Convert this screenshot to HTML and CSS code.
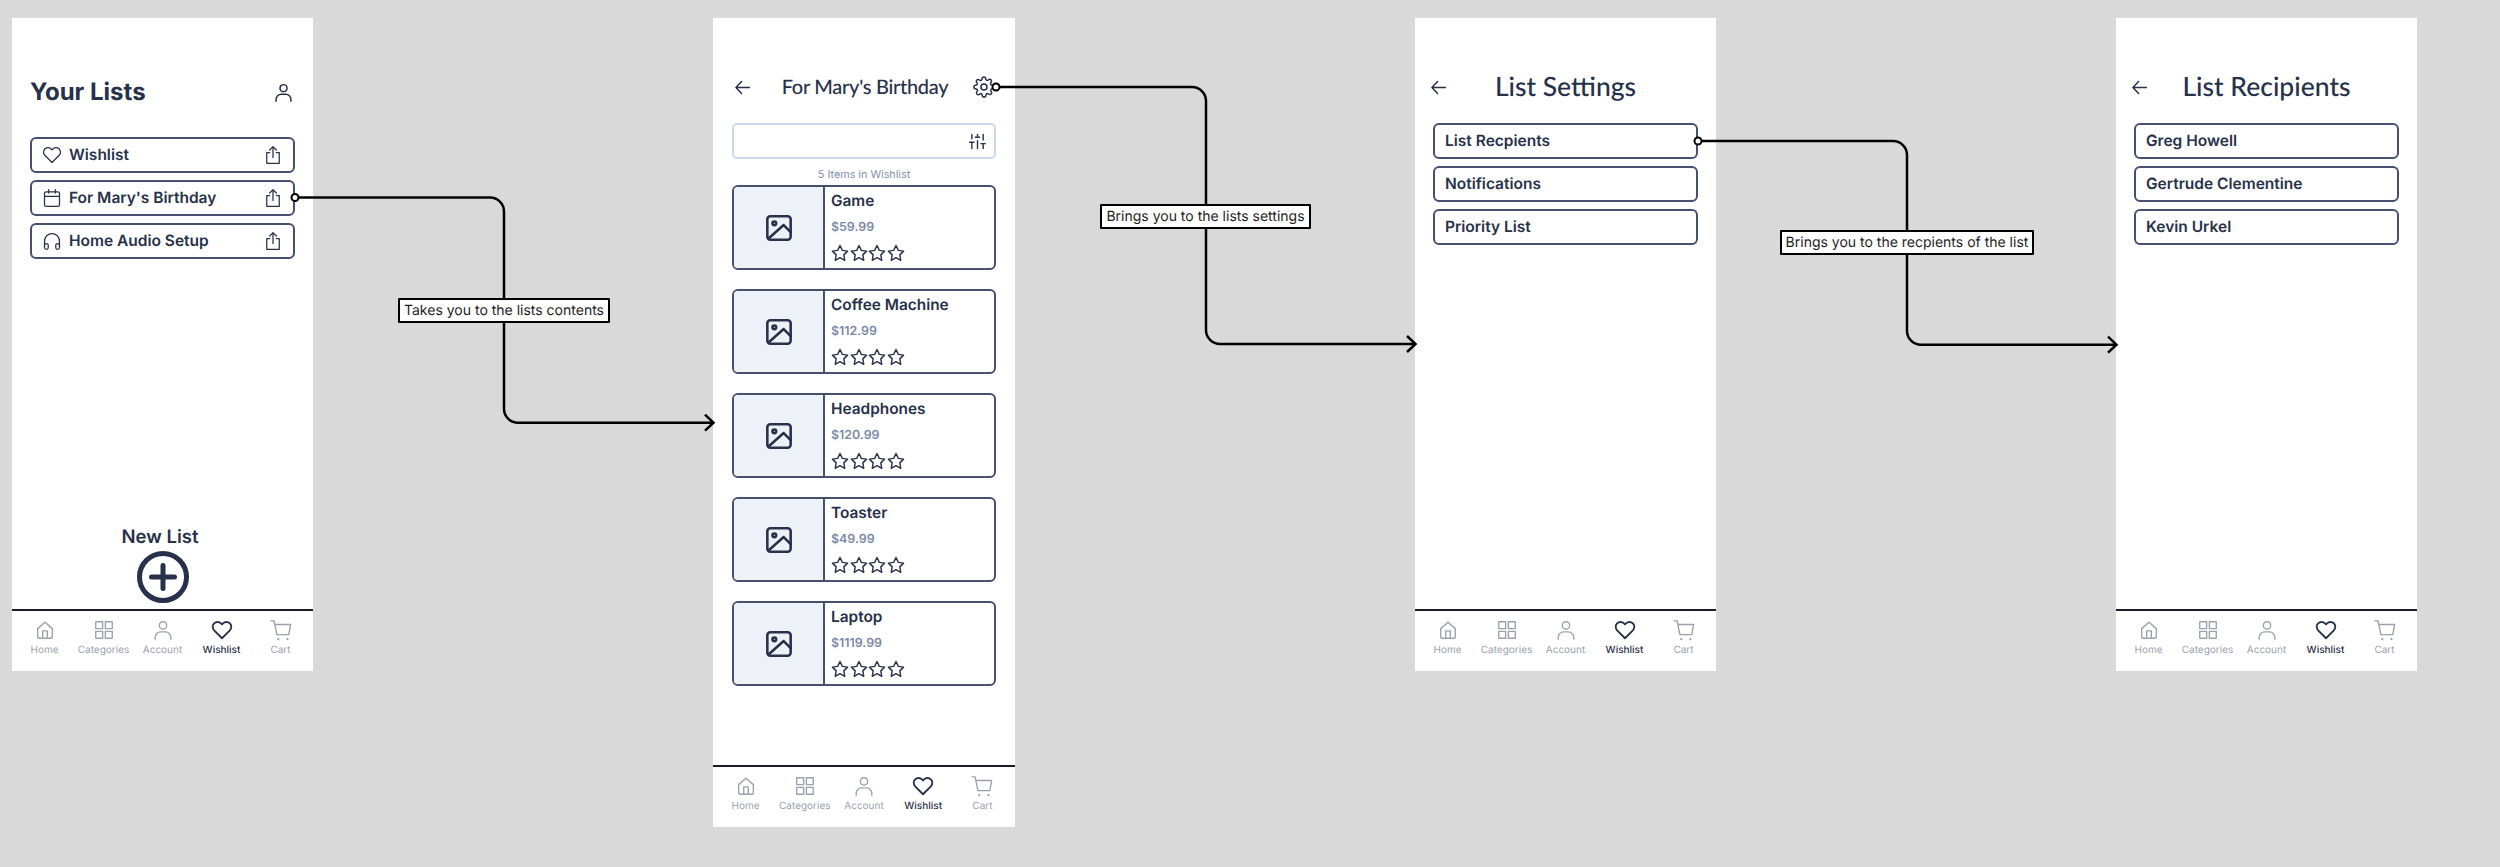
FILE: index.html
```html
<!DOCTYPE html>
<html lang="en">
<head>
<meta charset="utf-8">
<title>Wishlist flow</title>
<link rel="stylesheet" href="styles.css">
</head>
<body>
<svg class="sprite" aria-hidden="true">
  <symbol id="i-home" viewBox="0 0 24 24"><path d="M4 10.5 12 3.5l8 7V19a2 2 0 0 1-2 2H6a2 2 0 0 1-2-2z"/><path d="M9.5 21v-8h5v8"/></symbol>
  <symbol id="i-grid" viewBox="0 0 24 24"><rect x="3" y="3" width="7.5" height="7.5"/><rect x="13.5" y="3" width="7.5" height="7.5"/><rect x="3" y="13.5" width="7.5" height="7.5"/><rect x="13.5" y="13.5" width="7.5" height="7.5"/></symbol>
  <symbol id="i-user" viewBox="0 0 24 24"><circle cx="12" cy="7" r="4"/><path d="M3.5 22v-2a6 6 0 0 1 6-6h5a6 6 0 0 1 6 6v2"/></symbol>
  <symbol id="i-heart" viewBox="0 0 24 24"><path d="M12 21 3.4 12.3a5.3 5.3 0 0 1 0-7.5 5.3 5.3 0 0 1 7.5 0L12 5.9l1.1-1.1a5.3 5.3 0 0 1 7.5 0 5.3 5.3 0 0 1 0 7.5z"/></symbol>
  <symbol id="i-cart" viewBox="0 0 24 24"><path d="M1 2h3.5l3 15h13l2-11H5.5"/><path class="dot" d="M9 22h.01M19 22h.01"/></symbol>
  <symbol id="i-share" viewBox="0 0 24 24"><path d="M8 9H4.500v13h15V9H16"/><path d="M12 15V2M8 6l4-4 4 4"/></symbol>
  <symbol id="i-calendar" viewBox="0 0 24 24"><rect x="3" y="4.5" width="18" height="17.5" rx="2"/><path d="M3 10h18M8 2v4M16 2v4"/></symbol>
  <symbol id="i-headphones" viewBox="0 0 24 24"><path d="M3 18v-6a9 9 0 0 1 18 0v6"/><rect x="3" y="15" width="4.5" height="7" rx="2.2"/><rect x="16.5" y="15" width="4.5" height="7" rx="2.2"/></symbol>
  <symbol id="i-back" viewBox="0 0 24 24"><path d="M23 12H1.5M10.5 2.5 1.5 12l9 9.500"/></symbol>
  <symbol id="i-gear" viewBox="0 0 24 24"><circle cx="12" cy="12" r="3.300"/><path d="M19.400 15a1.650 1.650 0 0 0 .330 1.820l.060.060a2 2 0 1 1-2.830 2.830l-.060-.060a1.650 1.650 0 0 0-2.800 1.170V21a2 2 0 1 1-4 0v-.090a1.650 1.650 0 0 0-2.820-1.170l-.060.060a2 2 0 1 1-2.830-2.830l.060-.060a1.650 1.650 0 0 0-1.170-2.800H3a2 2 0 1 1 0-4h.090a1.650 1.650 0 0 0 1.170-2.820l-.060-.060a2 2 0 1 1 2.830-2.830l.060.060a1.650 1.650 0 0 0 2.800-1.170V3a2 2 0 1 1 4 0v.090a1.650 1.650 0 0 0 2.820 1.170l.060-.060a2 2 0 1 1 2.830 2.830l-.060.060a1.650 1.650 0 0 0 1.170 2.800H21a2 2 0 1 1 0 4h-.090a1.650 1.650 0 0 0-1.510 1.110z"/></symbol>
  <symbol id="i-sliders" viewBox="0 0 24 24"><path d="M4 22v-9M4 8V2M12 22V11M12 6V2M20 22v-7M20 10V2M1 13h6M9 6h6M17 15h6"/></symbol>
  <symbol id="i-image" viewBox="0 0 24 24"><rect x="2" y="2" width="20" height="20" rx="2.500"/><circle cx="8" cy="8" r="1.600"/><path d="M3 21 16 9.500l6 6"/></symbol>
  <symbol id="i-star" viewBox="0 0 24 24"><path d="m12 2 3.100 6.500 7 1-5 5 1.200 7.200L12 18.300l-6.300 3.400 1.200-7.200-5-5 7-1z"/></symbol>
  <symbol id="i-plus" viewBox="0 0 52 52"><circle cx="26" cy="26" r="23.500"/><path d="M14.500 26h23M26 14.500v23"/></symbol>
</svg>

<main class="canvas">

  <section class="frame frame-a">
    <header class="top-lists">
      <h1 class="lists-title">Your Lists</h1>
      <svg class="icon icon-person"><use href="#i-user"/></svg>
    </header>
    <ul class="rows rows-lists">
      <li class="row row-icons"><svg class="icon icon-row"><use href="#i-heart"/></svg><span class="row-text">Wishlist</span><svg class="icon icon-share"><use href="#i-share"/></svg></li>
      <li class="row row-icons"><svg class="icon icon-row"><use href="#i-calendar"/></svg><span class="row-text">For Mary's Birthday</span><svg class="icon icon-share"><use href="#i-share"/></svg></li>
      <li class="row row-icons"><svg class="icon icon-row"><use href="#i-headphones"/></svg><span class="row-text">Home Audio Setup</span><svg class="icon icon-share"><use href="#i-share"/></svg></li>
    </ul>
    <div class="new-list">
      <span class="new-list-text">New List</span>
      <svg class="icon icon-plus"><use href="#i-plus"/></svg>
    </div>
    <nav class="nav">
      <div class="nav-item"><svg class="icon nav-icon"><use href="#i-home"/></svg><span>Home</span></div>
      <div class="nav-item"><svg class="icon nav-icon"><use href="#i-grid"/></svg><span>Categories</span></div>
      <div class="nav-item"><svg class="icon nav-icon"><use href="#i-user"/></svg><span>Account</span></div>
      <div class="nav-item nav-active"><svg class="icon nav-icon"><use href="#i-heart"/></svg><span>Wishlist</span></div>
      <div class="nav-item"><svg class="icon nav-icon"><use href="#i-cart"/></svg><span>Cart</span></div>
    </nav>
  </section>

  <section class="frame frame-b">
    <header class="top top-tall">
      <svg class="icon icon-back"><use href="#i-back"/></svg>
      <h1 class="page-title page-title-b">For Mary's Birthday</h1>
      <svg class="icon icon-gear"><use href="#i-gear"/></svg>
    </header>
    <div class="body-b">
      <div class="search"><svg class="icon icon-sliders"><use href="#i-sliders"/></svg></div>
      <p class="count">5 Items in Wishlist</p>
      <ul class="cards">
        <li class="card"><div class="thumb"><svg class="icon icon-image"><use href="#i-image"/></svg></div><div class="info"><span class="name">Game</span><span class="price">$59.99</span><div class="stars"><svg class="icon star"><use href="#i-star"/></svg><svg class="icon star"><use href="#i-star"/></svg><svg class="icon star"><use href="#i-star"/></svg><svg class="icon star"><use href="#i-star"/></svg></div></div></li>
        <li class="card"><div class="thumb"><svg class="icon icon-image"><use href="#i-image"/></svg></div><div class="info"><span class="name">Coffee Machine</span><span class="price">$112.99</span><div class="stars"><svg class="icon star"><use href="#i-star"/></svg><svg class="icon star"><use href="#i-star"/></svg><svg class="icon star"><use href="#i-star"/></svg><svg class="icon star"><use href="#i-star"/></svg></div></div></li>
        <li class="card"><div class="thumb"><svg class="icon icon-image"><use href="#i-image"/></svg></div><div class="info"><span class="name">Headphones</span><span class="price">$120.99</span><div class="stars"><svg class="icon star"><use href="#i-star"/></svg><svg class="icon star"><use href="#i-star"/></svg><svg class="icon star"><use href="#i-star"/></svg><svg class="icon star"><use href="#i-star"/></svg></div></div></li>
        <li class="card"><div class="thumb"><svg class="icon icon-image"><use href="#i-image"/></svg></div><div class="info"><span class="name">Toaster</span><span class="price">$49.99</span><div class="stars"><svg class="icon star"><use href="#i-star"/></svg><svg class="icon star"><use href="#i-star"/></svg><svg class="icon star"><use href="#i-star"/></svg><svg class="icon star"><use href="#i-star"/></svg></div></div></li>
        <li class="card"><div class="thumb"><svg class="icon icon-image"><use href="#i-image"/></svg></div><div class="info"><span class="name">Laptop</span><span class="price">$1119.99</span><div class="stars"><svg class="icon star"><use href="#i-star"/></svg><svg class="icon star"><use href="#i-star"/></svg><svg class="icon star"><use href="#i-star"/></svg><svg class="icon star"><use href="#i-star"/></svg></div></div></li>
      </ul>
    </div>
    <nav class="nav">
      <div class="nav-item"><svg class="icon nav-icon"><use href="#i-home"/></svg><span>Home</span></div>
      <div class="nav-item"><svg class="icon nav-icon"><use href="#i-grid"/></svg><span>Categories</span></div>
      <div class="nav-item"><svg class="icon nav-icon"><use href="#i-user"/></svg><span>Account</span></div>
      <div class="nav-item nav-active"><svg class="icon nav-icon"><use href="#i-heart"/></svg><span>Wishlist</span></div>
      <div class="nav-item"><svg class="icon nav-icon"><use href="#i-cart"/></svg><span>Cart</span></div>
    </nav>
  </section>

  <section class="frame frame-c">
    <header class="top">
      <svg class="icon icon-back"><use href="#i-back"/></svg>
      <h1 class="page-title">List Settings</h1>
    </header>
    <ul class="rows rows-plain">
      <li class="row"><span class="row-text">List Recpients</span></li>
      <li class="row"><span class="row-text">Notifications</span></li>
      <li class="row"><span class="row-text">Priority List</span></li>
    </ul>
    <nav class="nav">
      <div class="nav-item"><svg class="icon nav-icon"><use href="#i-home"/></svg><span>Home</span></div>
      <div class="nav-item"><svg class="icon nav-icon"><use href="#i-grid"/></svg><span>Categories</span></div>
      <div class="nav-item"><svg class="icon nav-icon"><use href="#i-user"/></svg><span>Account</span></div>
      <div class="nav-item nav-active"><svg class="icon nav-icon"><use href="#i-heart"/></svg><span>Wishlist</span></div>
      <div class="nav-item"><svg class="icon nav-icon"><use href="#i-cart"/></svg><span>Cart</span></div>
    </nav>
  </section>

  <section class="frame frame-d">
    <header class="top">
      <svg class="icon icon-back"><use href="#i-back"/></svg>
      <h1 class="page-title">List Recipients</h1>
    </header>
    <ul class="rows rows-plain">
      <li class="row"><span class="row-text">Greg Howell</span></li>
      <li class="row"><span class="row-text">Gertrude Clementine</span></li>
      <li class="row"><span class="row-text">Kevin Urkel</span></li>
    </ul>
    <nav class="nav">
      <div class="nav-item"><svg class="icon nav-icon"><use href="#i-home"/></svg><span>Home</span></div>
      <div class="nav-item"><svg class="icon nav-icon"><use href="#i-grid"/></svg><span>Categories</span></div>
      <div class="nav-item"><svg class="icon nav-icon"><use href="#i-user"/></svg><span>Account</span></div>
      <div class="nav-item nav-active"><svg class="icon nav-icon"><use href="#i-heart"/></svg><span>Wishlist</span></div>
      <div class="nav-item"><svg class="icon nav-icon"><use href="#i-cart"/></svg><span>Cart</span></div>
    </nav>
  </section>

  <svg class="wires" viewBox="0 0 2500 867" aria-hidden="true">
    <path d="M295 197.500H490A14 14 0 0 1 504 211.500V408.700A14 14 0 0 0 518 422.700H713M705 414.700 713.500 422.700 705 430.700"/>
    <path d="M996 87H1192A14 14 0 0 1 1206 101V330A14 14 0 0 0 1220 344H1415M1407 336 1415.500 344 1407 352"/>
    <path d="M1698 141H1893A14 14 0 0 1 1907 155V330.700A14 14 0 0 0 1921 344.700H2116M2108 336.700 2116.500 344.700 2108 352.700"/>
    <circle cx="295" cy="197.500" r="3.500"/>
    <circle cx="996" cy="87" r="3.500"/>
    <circle cx="1698" cy="141" r="3.500"/>
  </svg>

  <div class="note note-a">Takes you to the lists contents</div>
  <div class="note note-b">Brings you to the lists settings</div>
  <div class="note note-c">Brings you to the recpients of the list</div>
</main>
</body>
</html>
```

FILE: styles.css
```css
* { box-sizing: border-box; }

html, body { margin: 0; padding: 0; }

body {
  background: #d9d9d9;
  color: #27314a;
  font-family: Inter, "Liberation Sans", sans-serif;
  text-rendering: geometricPrecision;
}

.sprite { display: none; }

.canvas {
  position: relative;
  width: 2500px;
  height: 867px;
  overflow: hidden;
  background: #d9d9d9;
}

.frame {
  position: absolute;
  top: 18px;
  width: 301px;
  height: 653px;
  display: flex;
  flex-direction: column;
  background: #fff;
}

.frame-a { left: 12px; }
.frame-b { left: 713px; width: 302px; height: 809px; }
.frame-c { left: 1415px; }
.frame-d { left: 2116px; }

.icon {
  display: block;
  flex: none;
  fill: none;
  stroke: currentColor;
  stroke-width: 2;
  stroke-linecap: round;
  stroke-linejoin: round;
}

/* Headers */
.top-lists {
  display: flex;
  align-items: center;
  justify-content: space-between;
  height: 36px;
  margin: 56px 19px 0 18px;
}

.lists-title {
  margin: 0;
  font-size: 24px;
  font-weight: 700;
  line-height: 36px;
}

.icon-person { width: 21px; height: 21px; stroke-width: 1.700; }

.top {
  display: grid;
  grid-template-columns: 1fr auto 1fr;
  align-items: center;
  height: 36px;
  margin-top: 50px;
  padding: 0 16px;
}

.top-tall { height: 38px; padding: 0 20px 0 22px; }

.page-title {
  grid-column: 2;
  margin: 0 0 2px;
  font-family: Lato, "Noto Sans", sans-serif;
  font-size: 26.500px;
  font-weight: 500;
  line-height: 36px;
  white-space: nowrap;
}

.page-title-b { margin: 0; font-size: 20px; letter-spacing: -0.300px; }

.icon-back { grid-column: 1; grid-row: 1; width: 15px; height: 15px; stroke-width: 2.400; }

.icon-gear { grid-column: 3; justify-self: end; width: 22px; height: 22px; stroke-width: 1.600; }

/* List rows */
.rows {
  display: flex;
  flex-direction: column;
  gap: 7px;
  margin: 0;
  padding: 0 18px;
  list-style: none;
}

.rows-lists { margin-top: 27px; }
.rows-plain { margin-top: 19px; }

.row {
  display: flex;
  align-items: center;
  height: 36px;
  padding: 0 10px;
  border: 2px solid #465070;
  border-radius: 6px;
}

.row-icons { gap: 7px; }

.row-text {
  flex: 1;
  font-size: 15.500px;
  font-weight: 600;
  line-height: 20px;
}

.icon-row { width: 20px; height: 20px; stroke-width: 1.500; }
.icon-share { width: 20px; height: 20px; stroke-width: 1.500; }

/* New list */
.new-list {
  display: flex;
  flex-direction: column;
  align-items: center;
  margin-top: auto;
  padding-bottom: 6px;
}

.new-list-text {
  margin-left: -5px;
  font-size: 18.500px;
  font-weight: 600;
  line-height: 24px;
  transform: translateY(1px);
}

.icon-plus { width: 52px; height: 52px; margin-top: 3px; stroke-width: 5; }

/* Second screen */
.body-b { padding: 17px 19px 0; }

.search {
  display: flex;
  align-items: center;
  justify-content: flex-end;
  height: 36px;
  padding-right: 7px;
  border: 2px solid #cfd8ea;
  border-radius: 5px;
}

.icon-sliders { width: 19px; height: 17px; stroke-width: 2; }

.count {
  margin: 10px 0 4px;
  font-size: 10.800px;
  line-height: 12px;
  text-align: center;
  color: #8490ad;
}

.cards {
  display: flex;
  flex-direction: column;
  gap: 19px;
  margin: 0;
  padding: 0;
  list-style: none;
}

.card {
  display: flex;
  height: 85px;
  border: 2px solid #465070;
  border-radius: 6px;
  overflow: hidden;
}

.thumb {
  display: flex;
  align-items: center;
  justify-content: center;
  flex: none;
  width: 91px;
  background: #eef1f8;
  border-right: 2px solid #465070;
}

.icon-image { width: 28px; height: 28px; stroke-width: 2.200; }

.info {
  display: flex;
  flex-direction: column;
  padding: 5px 0 0 6px;
}

.name {
  font-size: 15.400px;
  font-weight: 600;
  line-height: 18px;
}

.price {
  margin-top: 8px;
  font-size: 12.400px;
  font-weight: 600;
  line-height: 18px;
  color: #7d89a8;
}

.stars { display: flex; gap: 0.500px; margin-top: 8px; }

.star { width: 18px; height: 18px; stroke-width: 1.900; }

/* Bottom navigation */
.nav {
  display: grid;
  grid-template-columns: repeat(5, 1fr);
  flex: none;
  height: 62px;
  margin-top: auto;
  padding: 8px 3px 0;
  border-top: 2px solid #151c2e;
}

.new-list + .nav { margin-top: 0; }

.nav-item {
  display: flex;
  flex-direction: column;
  align-items: center;
  gap: 3px;
  font-size: 10px;
  line-height: 12px;
  color: #9ca1ad;
}

.nav-icon { width: 22px; height: 22px; stroke-width: 1.500; }

.nav-active { color: #27314a; font-weight: 500; }
.nav-active .nav-icon { stroke-width: 2; }

.dot { stroke-width: 2.500; }

/* Connectors */
.wires {
  position: absolute;
  inset: 0;
  width: 2500px;
  height: 867px;
  fill: none;
  stroke: #000;
  stroke-width: 2.500;
}

.wires circle { fill: #fff; stroke-width: 2; }

.note {
  position: absolute;
  display: flex;
  align-items: center;
  justify-content: center;
  height: 25px;
  border: 2px solid #000;
  border-radius: 1px;
  background: #fff;
  font-size: 14px;
  white-space: nowrap;
  color: #1e1e1e;
}

.note-a { left: 398px; top: 298px; width: 212px; }
.note-b { left: 1100px; top: 204px; width: 211px; }
.note-c { left: 1780px; top: 230px; width: 254px; }
```
